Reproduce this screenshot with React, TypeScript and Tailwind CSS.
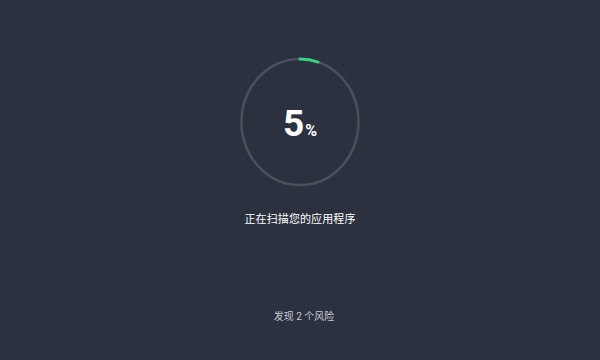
import React from "react";

export default function App() {
  return (
    <div
      className="w-[600px] h-[360px] bg-[#2c313f] flex flex-col items-center overflow-hidden"
      style={{ fontFamily: '"Roboto", "Noto Sans CJK SC", sans-serif' }}
    >
      <div className="relative mt-[55px] w-[124px] h-[134px]">
        <svg width="124" height="134" viewBox="0 0 124 134" className="block">
          <ellipse cx="62" cy="67" rx="58.5" ry="63" fill="none" stroke="#4b505c" strokeWidth="2.5" />
          <path
            d="M 62 4 A 58.5 63 0 0 1 80.08 7.08"
            fill="none"
            stroke="#36d07f"
            strokeWidth="3"
            strokeLinecap="round"
          />
        </svg>
        <div className="absolute inset-0 flex items-center justify-center pt-[2px]">
          <div className="flex items-baseline text-white font-bold">
            <span className="text-[37px] leading-none">5</span>
            <span className="text-[16px] leading-none ml-[1px]">%</span>
          </div>
        </div>
      </div>
      <div className="mt-[24px] text-[11px] leading-[14px] text-white tracking-[0.1px]">
        正在扫描您的应用程序
      </div>
      <div className="mt-[84px] ml-[8px] text-[10px] leading-[12px] text-[#c9ccd3]">
        发现 2 个风险
      </div>
    </div>
  );
}
